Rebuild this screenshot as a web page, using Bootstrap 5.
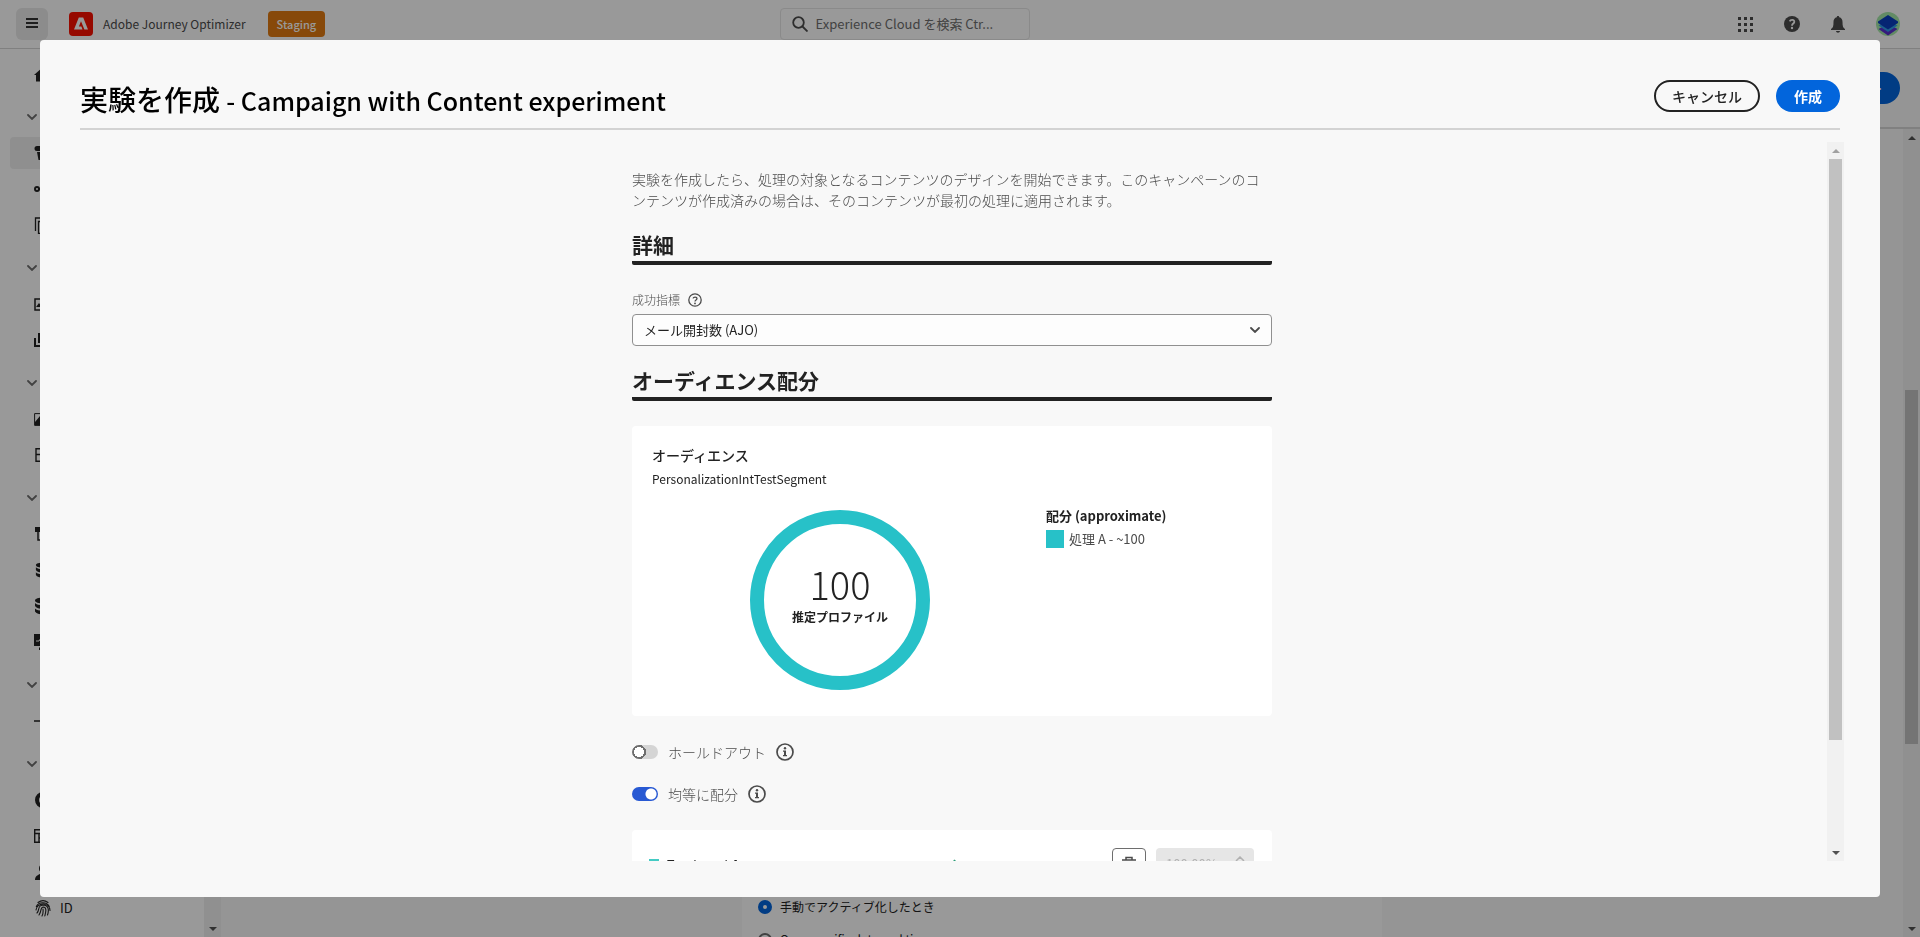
<!DOCTYPE html>
<html lang="ja">
<head>
<meta charset="utf-8">
<meta name="viewport" content="width=device-width, initial-scale=1">
<title>Adobe Journey Optimizer</title>
<link href="https://cdn.jsdelivr.net/npm/bootstrap@5.3.0/dist/css/bootstrap.min.css" rel="stylesheet">
<style>
  :root { --ink: #222; --soft: #4b4b4b; --teal: #27c1c8; --blue: #0265dc; }
  html, body { height: 100%; }
  body { font-family: "Noto Sans CJK JP", sans-serif; font-size: 13px; line-height: 20px; color: var(--ink); background: #fff; overflow: hidden; }
  svg { display: block; flex: none; }
  button, input, select { font-family: inherit; }

  /* application shell */
  .topbar { height: 49px; border-bottom: 1px solid #d5d5d5; padding: 0 20px 0 16px; display: grid; grid-template-columns: 764fr 250px 871fr; align-items: center; }
  .menu-btn { width: 32px; height: 32px; padding: 10px; border: 0; border-radius: 6px; background: #e9e9e9; }
  .logo-box { margin: 0 10px 0 21px; }
  .product { color: var(--soft); font-size: 12px; }
  .env-tag { margin-left: 22px; padding: 3px 9px; border-radius: 4px; background: #e17b11; color: #fff; font-size: 11px; font-weight: 500; }
  .search-box { height: 32px; border: 1px solid #e6e6e6; border-radius: 4px; padding: 0 11px; gap: 8px; }
  .search-box input { border: 0; outline: 0; background: none; padding: 0; width: 190px; font-size: 13px; color: #6e6e6e; }
  .search-box input::placeholder { color: #6e6e6e; opacity: 1; }
  .top-icon { border: 0; padding: 0; background: none; color: var(--soft); }
  .top-tools { gap: 31px; }
  .sidebar { width: 204px; padding-top: 7px; }
  .sidebar a, .group-btn { display: flex; align-items: center; height: 36px; color: #222; text-decoration: none; }
  .sidebar a { padding-left: 24px; margin-left: 10px; gap: 8px; color: var(--ink); }
  .sidebar a.current { background: #efefef; height: 32px; margin-top: 2px; margin-bottom: 2px; border-radius: 4px 0 0 4px; }
  .group-btn { width: 100%; margin-top: 7px; border: 0; background: none; padding: 0 0 0 27px; color: #6e6e6e; }
  .scrollrail { width: 17px; background: #f1f1f1; padding: 0 2px; flex: none; }
  .scrollrail .arrow { border: 4px solid transparent; width: 8px; margin: 7px 0 6px; }
  .scrollrail .up { border-top: 0; border-bottom-color: #505050; }
  .scrollrail .down { border-bottom: 0; border-top-color: #505050; }
  .thumb { background: #c1c1c1; align-self: stretch; }
  .page-area { background: #f8f8f8; min-width: 0; }
  .page-head { height: 80px; border-bottom: 2px solid #d5d5d5; padding: 0 20px; }
  .pill { height: 32px; border-radius: 16px; font-size: 14px; font-weight: 700; line-height: 18px; padding: 5px 18px; }
  .pill-blue { background: var(--blue); color: #fff; border: 0; }
  .pill-line { background: transparent; color: var(--ink); border: 2px solid var(--ink); font-weight: 500; padding: 5px 16px; }
  .page-card { width: 640px; height: 100%; background: #fff; padding: 0 16px; }
  .page-card label { font-size: 12px; line-height: 20px; }
  .page-card input { appearance: none; width: 14px; height: 14px; border: 2px solid #6e6e6e; border-radius: 50%; margin: 0; background: #fff; }
  .page-card input:checked { border: 5px solid var(--blue); }
  .clipped-row { height: 4px; }
  .clipped-row label { line-height: 12px; }
  .shade { background: #000; opacity: .4; }

  /* dialog */
  .dialog-wrap { padding: 40px; }
  .dialog-box { background: #f8f8f8; border-radius: 4px; height: 100%; padding: 0 36px 36px 40px; overflow: hidden; }
  .dialog-head { height: 90px; border-bottom: 2px solid #d3d3d3; margin-right: 4px; padding-top: 24px; flex: none; }
  .dialog-head h1 { font-size: 28px; font-weight: 500; color: #000; line-height: 36px; margin: 6px 0 0; }
  .dialog-head h1 span { font-size: 25px; }
  .dialog-main { margin-top: 12px; min-height: 0; }
  .scroll-pane { overflow-y: auto; scrollbar-width: none; padding-right: 3px; }
  .scroll-pane::-webkit-scrollbar { display: none; }
  .form-col { width: 640px; padding-top: 27px; }
  .intro { font-size: 14px; line-height: 21px; font-weight: 300; color: #4b4b4b; margin: 0 0 20px; }
  .section-title { font-size: 21px; line-height: 26px; font-weight: 700; margin: 0; padding-bottom: 4px; border-bottom: 4px solid var(--ink); border-radius: 2px; }
  .field-row { margin-top: 25px; }
  .field-label { font-size: 12px; font-weight: 300; line-height: 20px; color: var(--soft); }
  .metric-select { width: 100%; height: 32px; border: 1px solid #909090; border-radius: 4px; background-color: #fdfdfd; font-size: 13px; line-height: 20px; padding: 0 11px; appearance: none; color: var(--ink); }
  .select-arrow { position: absolute; right: 12px; top: 13px; pointer-events: none; color: var(--soft); }
  .second-title { margin-top: 21px; }
  .panel { background: #fff; border-radius: 4px; }
  .audience { height: 290px; padding: 19px 20px; margin-top: 25px; }
  .audience-title { font-size: 14px; font-weight: 500; }
  .audience-name { font-size: 12px; }
  .split { display: grid; grid-template-columns: 376fr 206fr; gap: 18px; margin-top: 16px; }
  .donut { width: 180px; height: 180px; border: 14px solid var(--teal); border-radius: 50%; margin: 5px auto 0; padding-top: 35px; }
  .donut .count { font-size: 38px; font-weight: 200; line-height: 50px; }
  .donut .caption-txt { font-size: 12px; font-weight: 700; line-height: 16px; white-space: nowrap; }
  .legend-title { font-size: 13px; font-weight: 700; margin: 1px 0 3px; }
  .legend-key { width: 18px; height: 18px; background: var(--teal); }
  .legend-item { color: var(--soft); gap: 5px; }
  .toggle-line { color: var(--soft); height: 20px; gap: 10px; margin-top: 26px; }
  .toggle-line + .toggle-line { margin-top: 22px; }
  .toggle-line label { font-size: 14px; font-weight: 300; }
  .toggle-line input { appearance: none; width: 26px; height: 14px; margin: 0; border-radius: 7px; background: radial-gradient(circle at 7px 7px, #fff 5px, #6e6e6e 5px, #6e6e6e 7px, transparent 7px) #d5d5d5; }
  .toggle-line input:checked { background: radial-gradient(circle at 19px 7px, #fff 5px, transparent 6px) #2859d3; }
  .treatment { height: 68px; padding: 18px 18px 18px 17px; margin-top: 26px; }
  .treatment .swatch { width: 10px; height: 10px; background: #44cbc4; }
  .treatment-name { flex: 279 1 0; font-size: 12px; font-weight: 700; }
  .treatment-rest { flex: 154 1 0; }
  .trash-btn { width: 34px; height: 32px; border: 1px solid #6e6e6e; border-radius: 4px; background: #fff; padding: 7px; }
  .pct { width: 98px; height: 32px; background: #e6e6e6; border-radius: 4px; padding: 0 9px 0 10px; margin-left: 10px; }
  .pct input { width: 60px; border: 0; padding: 0; background: none; color: #b1b1b1; font-size: 13px; }
</style>
<script src="https://cdn.jsdelivr.net/npm/bootstrap@5.3.0/dist/js/bootstrap.bundle.min.js"></script>
</head>
<body>
<svg width="0" height="0" class="position-absolute" aria-hidden="true">
  <symbol id="chev" viewBox="0 0 10 6"><path d="M1 1l4 4 4-4" fill="none" stroke="currentColor" stroke-width="1.800" stroke-linecap="round"/></symbol>
  <symbol id="info" viewBox="0 0 18 18"><circle cx="9" cy="9" r="8" fill="none" stroke="currentColor" stroke-width="1.700"/><circle cx="9" cy="5.200" r="1.200" fill="currentColor"/><path d="M7 7.500h3v4.500h1v1.200H7V12h1V8.700H7z" fill="currentColor"/></symbol>
  <symbol id="db" viewBox="0 0 16 18"><path d="M0 3.500C0 -.5 16 -.5 16 3.500S0 7.500 0 3.500zM0 6c2 3 14 3 16 0v3c-2 4-14 4-16 0zM0 11.500c2 3 14 3 16 0v3c-2 4-14 4-16 0z" fill="currentColor"/></symbol>
</svg>

<div class="d-flex flex-column vh-100">
  <header class="topbar">
    <div class="d-flex align-items-center">
      <button class="menu-btn" type="button" aria-label="メニュー"><svg width="12" height="12" viewBox="0 0 12 12"><path d="M0 1h12M0 5h12M0 9h12" stroke="#333" stroke-width="2"/></svg></button>
      <svg class="logo-box" width="24" height="24" viewBox="0 0 24 24"><rect width="24" height="24" rx="4" fill="#fa0f00"/><path d="M9.800 5.500h4.400L19 17.500h-3.600L12 9.300l-2.100 5.300h2.500l1.100 2.900H5z" fill="#fff"/></svg>
      <span class="product">Adobe Journey Optimizer</span>
      <span class="env-tag">Staging</span>
    </div>
    <div class="search-box d-flex align-items-center">
      <svg width="16" height="16" viewBox="0 0 16 16" fill="none" stroke="#4b4b4b" stroke-width="1.800"><circle cx="6.500" cy="6.500" r="5.300"/><path d="M10.500 10.500l5 5"/></svg>
      <input type="search" aria-label="検索" placeholder="Experience Cloud を検索 Ctr...">
    </div>
    <div class="top-tools d-flex align-items-center justify-content-end">
      <button class="top-icon" type="button" aria-label="アプリ"><svg width="15" height="15" viewBox="0 0 15 15"><path d="M0 1.500h15M0 7.500h15M0 13.500h15" stroke="currentColor" stroke-width="3" stroke-dasharray="3 3"/></svg></button>
      <button class="top-icon" type="button" aria-label="ヘルプ"><svg width="16" height="16" viewBox="0 0 16 16"><circle cx="8" cy="8" r="8" fill="currentColor"/><path d="M5.700 5.300C6.500 3.300 10.500 3.300 10.300 5.900 10.200 7.600 8 7.500 8 9.700" fill="none" stroke="#fff" stroke-width="1.800"/><circle cx="8" cy="12" r="1.200" fill="#fff"/></svg></button>
      <button class="top-icon" type="button" aria-label="通知"><svg width="14" height="17" viewBox="0 0 14 17"><path d="M7 0c.8 0 1.200.5 1.200 1.200C10.500 1.700 11.500 3.500 11.500 6c0 4 .5 6 2.500 7v1H0v-1c2-1 2.500-3 2.500-7 0-2.500 1-4.300 3.300-4.800C5.800.5 6.200 0 7 0zM5 15h4c-.3 2.300-3.700 2.300-4 0z" fill="currentColor"/></svg></button>
      <button class="top-icon" type="button" aria-label="アカウント"><svg width="24" height="24" viewBox="0 0 24 24"><circle cx="12" cy="12" r="12" fill="#a5e8a8"/><path d="M2.500 17L12 12l9.500 5-9.500 6.500z" fill="#5a2fd0"/><path d="M2.500 13.500L12 9l9.500 4.500L12 20z" fill="#2f9fe8"/><path d="M2 9.500L12 3l10 6.500V11l-10 6.500L2 11z" fill="#0a3fc0"/></svg></button>
    </div>
  </header>

  <div class="d-flex flex-fill overflow-hidden">
    <nav class="sidebar flex-shrink-0" aria-label="メイン">
      <a href="#" aria-label="ホーム"><svg width="18" height="16" viewBox="0 0 18 16"><path d="M9 1l9 8h-2.500v6.500h-4.500v-5H7v5H2V9H0z" fill="currentColor"/></svg></a>
      <button class="group-btn" type="button" aria-label="グループ"><svg width="10" height="6"><use href="#chev"/></svg></button>
      <a href="#" class="current" aria-label="キャンペーン"><svg width="18" height="16" viewBox="0 0 18 16"><path d="M3 1h13v5H3a2.500 2.500 0 0 1 0-5zM3 7h5v8H4.500z" fill="currentColor"/></svg></a>
      <a href="#" aria-label="ジャーニー"><svg width="18" height="16" viewBox="0 0 18 16" fill="none" stroke="currentColor" stroke-width="2"><circle cx="3" cy="8" r="2"/><path d="M5 8h8"/><circle cx="15" cy="8" r="2"/></svg></a>
      <a href="#" aria-label="テンプレート"><svg width="18" height="17" viewBox="0 0 18 17" fill="none" stroke="currentColor"><path d="M1.500 14V1h12M4.500 4.500h11v12h-11z" stroke-width="1.300"/></svg></a>
      <button class="group-btn" type="button" aria-label="グループ"><svg width="10" height="6"><use href="#chev"/></svg></button>
      <a href="#" aria-label="ページ"><svg width="18" height="13" viewBox="0 0 18 13"><path d="M1 1h16v11H1z" fill="none" stroke="currentColor" stroke-width="1.500"/><path d="M2 9l3-4 3 4 8-1v1H2z" fill="currentColor"/></svg></a>
      <a href="#" aria-label="フラグメント"><svg width="18" height="14" viewBox="0 0 18 14"><path d="M0 5h2v7h12v2H0zM4 0h12v10H4z" fill="currentColor"/><path d="M6 2h8v6H6z" fill="#fff"/></svg></a>
      <button class="group-btn" type="button" aria-label="グループ"><svg width="10" height="6"><use href="#chev"/></svg></button>
      <a href="#" aria-label="アセット"><svg width="18" height="13" viewBox="0 0 18 13"><path d="M.6.6h16.800v11.800H.6z" fill="none" stroke="currentColor"/><path d="M1 9l5-6 5 5 6 1v3H1z" fill="currentColor"/></svg></a>
      <a href="#" aria-label="リスト"><svg width="18" height="14" viewBox="0 0 18 14" fill="none" stroke="currentColor" stroke-width="1.400"><path d="M2 .7h14v12.600H2zM2 6.500h14"/></svg></a>
      <button class="group-btn" type="button" aria-label="グループ"><svg width="10" height="6"><use href="#chev"/></svg></button>
      <a href="#" aria-label="スキーマ"><svg width="18" height="14" viewBox="0 0 18 14"><path d="M1 0h8v5H1z" fill="currentColor"/><path d="M4 5v8h10" fill="none" stroke="currentColor" stroke-width="1.500"/></svg></a>
      <a href="#" aria-label="データセット"><svg width="18" height="16"><use href="#db"/></svg></a>
      <a href="#" aria-label="クエリ"><svg width="18" height="18"><use href="#db"/></svg></a>
      <a href="#" aria-label="モニタリング"><svg width="18" height="16" viewBox="0 0 18 16"><path d="M0 0h18v12H0zM5 13.500h8V16H5z" fill="currentColor"/><path d="M2 7h3l2-3 3 5 2-2h4" fill="none" stroke="#fff"/></svg></a>
      <button class="group-btn" type="button" aria-label="グループ"><svg width="10" height="6"><use href="#chev"/></svg></button>
      <a href="#" aria-label="接続"><svg width="18" height="16" viewBox="0 0 18 16"><path d="M0 8h18M9 2v12" stroke="currentColor" stroke-width="1.600"/></svg></a>
      <button class="group-btn" type="button" aria-label="グループ"><svg width="10" height="6"><use href="#chev"/></svg></button>
      <a href="#" aria-label="オーディエンス"><svg width="18" height="16" viewBox="0 0 18 16"><circle cx="9" cy="8" r="6" fill="none" stroke="currentColor" stroke-width="4"/></svg></a>
      <a href="#" aria-label="属性"><svg width="18" height="14" viewBox="0 0 18 14" fill="none" stroke="currentColor" stroke-width="1.400"><path d="M.7.7h16.600v12.600H.7zM1 4.500h16M5 5v8M5 9h12"/></svg></a>
      <a href="#" aria-label="プロファイル"><svg width="18" height="16" viewBox="0 0 18 16"><circle cx="9" cy="4.500" r="4" fill="currentColor"/><path d="M1 16c0-4 3-5 6-6.500h4c3 1.500 6 2.500 6 6.500z" fill="currentColor"/></svg></a>
      <a href="#"><svg width="18" height="17" viewBox="0 0 18 17" fill="none" stroke="currentColor" stroke-width="1.100" stroke-linecap="round"><path d="M4 2.500c3-2.300 7-2.300 10 0M2.300 6.500c2.500-5 10.500-5 13 0M2 10c.5-7.500 13.500-8.500 14 .5M3 13c3-3 0-7.500 6-8 6 0 6 5.500 4.500 10M5 15c3-4 1-7.500 4-8 4.500 0 2.500 6 1.800 9M8 16c1.300-2.500 1.300-4.500 1-7"/></svg><span>ID</span></a>
    </nav>
    <div class="scrollrail d-flex flex-column align-items-center justify-content-end"><span class="arrow down"></span></div>
    <main class="page-area flex-fill d-flex flex-column">
      <div class="page-head d-flex align-items-center justify-content-end flex-shrink-0"><button class="pill pill-blue" type="button">レビュー</button></div>
      <div class="d-flex flex-fill">
        <div class="flex-fill d-flex justify-content-center">
          <div class="page-card d-flex flex-column justify-content-end">
            <div class="d-flex align-items-center gap-2 mb-3"><input type="radio" name="start" id="st1" checked><label for="st1">手動でアクティブ化したとき</label></div>
            <div class="clipped-row d-flex align-items-start gap-2 overflow-hidden flex-shrink-0"><input type="radio" name="start" id="st2"><label for="st2">On a specific date and time</label></div>
          </div>
        </div>
        <div class="scrollrail d-flex flex-column align-items-center">
          <span class="arrow up"></span><span style="flex:244"></span><span class="thumb" style="flex:354"></span><span style="flex:176"></span><span class="arrow down"></span>
        </div>
      </div>
    </main>
  </div>
</div>

<div class="shade position-fixed top-0 start-0 w-100 h-100"></div>

<div class="dialog-wrap position-fixed top-0 start-0 w-100 h-100" role="dialog" aria-labelledby="dlg-title">
  <div class="dialog-box d-flex flex-column">
    <div class="dialog-head d-flex justify-content-between align-items-center">
      <h1 id="dlg-title">実験を作成 <span>- Campaign with Content experiment</span></h1>
      <div class="d-flex gap-3">
        <button type="button" class="pill pill-line">キャンセル</button>
        <button type="button" class="pill pill-blue">作成</button>
      </div>
    </div>
    <div class="dialog-main d-flex flex-fill">
      <div class="scroll-pane flex-fill">
        <div class="form-col mx-auto">
          <p class="intro">実験を作成したら、処理の対象となるコンテンツのデザインを開始できます。このキャンペーンのコンテンツが作成済みの場合は、そのコンテンツが最初の処理に適用されます。</p>
          <h2 class="section-title">詳細</h2>
          <div class="field-row d-flex align-items-center mb-1 gap-2">
            <label class="field-label" for="metric">成功指標</label>
            <svg width="14" height="14" viewBox="0 0 14 14"><circle cx="7" cy="7" r="6.200" fill="none" stroke="#4b4b4b" stroke-width="1.300"/><path d="M5 5.400C5.500 3.600 9 3.600 9 5.600 9 7 7 6.900 7 8.500" fill="none" stroke="#4b4b4b" stroke-width="1.300"/><circle cx="7" cy="10.400" r=".9" fill="#4b4b4b"/></svg>
          </div>
          <div class="position-relative">
            <select id="metric" class="metric-select"><option>メール開封数 (AJO)</option></select>
            <svg class="select-arrow" width="10" height="6"><use href="#chev"/></svg>
          </div>
          <h2 class="section-title second-title">オーディエンス配分</h2>
          <section class="panel audience">
            <div class="audience-title">オーディエンス</div>
            <div class="audience-name mt-1">PersonalizationIntTestSegment</div>
            <div class="split">
              <div class="donut text-center">
                <div class="count">100</div>
                <div class="caption-txt">推定プロファイル</div>
              </div>
              <div>
                <div class="legend-title">配分 (approximate)</div>
                <div class="legend-item d-flex align-items-center"><span class="legend-key"></span>処理 A - ~100</div>
              </div>
            </div>
          </section>
          <div class="toggle-line d-flex align-items-center">
            <input type="checkbox" role="switch" id="hold"><label for="hold">ホールドアウト</label>
            <svg width="18" height="18"><use href="#info"/></svg>
          </div>
          <div class="toggle-line d-flex align-items-center">
            <input type="checkbox" role="switch" id="even" checked><label for="even">均等に配分</label>
            <svg width="18" height="18"><use href="#info"/></svg>
          </div>
          <section class="panel treatment d-flex align-items-center">
            <span class="swatch me-2"></span><span class="treatment-name">Treatment A</span>
            <svg width="12" height="10" viewBox="0 0 12 10"><path d="M1 5l3 4 5-8" fill="none" stroke="#2d9d78" stroke-width="2"/></svg>
            <span class="treatment-rest"></span>
            <button type="button" class="trash-btn" aria-label="削除"><svg width="18" height="18" viewBox="0 0 18 18" fill="none" stroke="#4b4b4b" stroke-width="1.500"><path d="M2 4h14M6 4V1.500h6V4M4 6l1 11h8l1-11M7 7v8M11 7v8"/></svg></button>
            <div class="pct d-flex justify-content-between"><input type="text" value="100.00%" aria-label="配分率" disabled><svg class="mt-2" width="10" height="16" viewBox="0 0 10 16" fill="none" stroke="#b1b1b1" stroke-width="1.500"><path d="M1 5l4-4 4 4M1 11l4 4 4-4"/></svg></div>
          </section>
        </div>
      </div>
      <div class="scrollrail d-flex flex-column align-items-center">
        <span class="arrow up opacity-50"></span><span class="thumb" style="flex:581"></span><span style="flex:104"></span><span class="arrow down"></span>
      </div>
    </div>
  </div>
</div>
</body>
</html>
